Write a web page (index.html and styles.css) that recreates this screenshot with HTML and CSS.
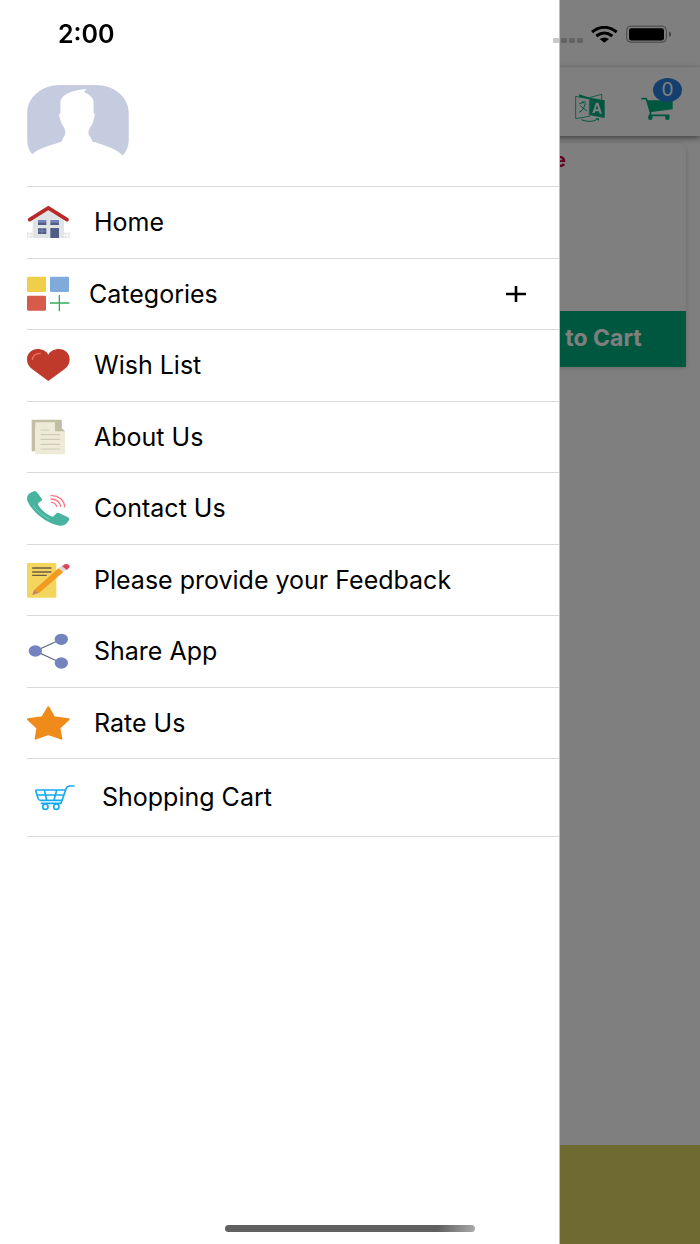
FILE: index.html
```html
<!DOCTYPE html>
<html lang="en">
<head>
<meta charset="utf-8">
<meta name="viewport" content="width=device-width, initial-scale=1">
<title>Shop menu</title>
<link rel="stylesheet" href="styles.css">
</head>
<body>
<div class="app">
  <header class="app-bar">
    <button class="icon-button" type="button" aria-label="Language">
      <svg class="translate-icon" viewBox="105 280 90 90" aria-hidden="true">
        <g fill="none" stroke="#00ae80" stroke-width="2.5">
          <path d="M107 290 148 298V350L107 357Z"/>
          <path d="M143 295 185 284V300"/>
          <path d="M118 312 137 306M128 304 129 311M136 310Q132 332 117 338M121 318Q130 328 141 333" stroke-width="3"/>
          <path d="M124 360Q150 371 172 359" stroke-width="3"/>
        </g>
        <path fill="#00ae80" d="M117 284 150 294 194 302V355L150 347V298L117 291ZM167 356H177V364Z"/>
        <path fill="#fff" fill-rule="evenodd" d="M168 309H175L186 342H179L177 335H166L164 340H157ZM171 316 167 329H175Z"/>
      </svg>
    </button>
    <button class="icon-button cart-button" type="button" aria-label="Cart">
      <svg class="cart-icon" viewBox="302 292 96 72" aria-hidden="true">
        <path fill="none" stroke="#00ae80" stroke-width="5" stroke-linecap="round" stroke-linejoin="round" d="M305 297H318L331 340 328 347H386"/>
        <path fill="#00ae80" d="M320 302H397V329L329 338Z"/>
        <circle cx="330" cy="354" r="7" fill="#00ae80"/><circle cx="381" cy="354" r="7" fill="#00ae80"/>
      </svg>
      <span class="badge">0</span>
    </button>
  </header>
  <main class="products">
    <article class="card">
      <h2 class="card-title">Apple</h2>
      <button class="add-button" type="button">Add to Cart</button>
    </article>
  </main>
  <footer class="app-footer"></footer>
</div>
<div class="scrim"></div>

<aside class="drawer">
  <div class="profile">
    <svg class="avatar" viewBox="81 254 306 214" role="img" aria-label="Profile picture">
      <path fill="#c6cce0" d="M96 463Q81 446 81 420V338C81 290 126 254 180 254H288C342 254 387 290 387 338V422Q386 447 369 467C354 449 328 439 277 424C274 416 273 412 268 407Q262 396 270 383C276 374 280 368 281 359Q286 346 284 340L281 339V304C280 290 266 282 252 275L260 267C222 267 184 282 181 304V340Q175 340 178 350L182 363Q186 373 191 381 199 394 193 407 188 414 185 424C138 440 109 448 96 463Z"/>
    </svg>
  </div>
  <nav class="menu" aria-label="Main">
    <a class="item" href="#home">
      <svg class="item-icon" viewBox="81 42 129 108" aria-hidden="true">
        <path fill="none" stroke="#dfe2e3" stroke-width="3" d="M81 131H209M81 141H209M83 127V145M93 127V145M197 127V145M207 127V145"/>
        <path fill="#e1e4e5" d="M98 84 145 54 192 84V144H98Z"/>
        <path fill="none" stroke="#b82a27" stroke-width="11" stroke-linecap="round" stroke-linejoin="miter" d="M89 89 145 54 201 89"/>
        <path fill="#7182c0" d="M114 90H139V97H114ZM151 90H177V97H151Z"/>
        <path fill="#525d83" d="M114 97H139V105H114ZM151 97H177V105H151ZM114 115H139V132H114ZM151 114H177V144H151Z"/>
        <path stroke="#8c9bd0" stroke-width="2" d="M126 115V132M114 123H139"/>
      </svg>
      <span>Home</span>
    </a>
    <button class="item item-expand" type="button" aria-expanded="false">
      <svg class="item-icon" viewBox="81 257 129 108" aria-hidden="true">
        <rect x="81" y="259" width="57" height="46" rx="4" fill="#efce4a"/>
        <rect x="150" y="259" width="57" height="46" rx="4" fill="#7fabda"/>
        <rect x="81" y="316" width="57" height="45" rx="4" fill="#d75a4a"/>
        <path fill="none" stroke="#35ad5b" stroke-width="4" d="M150 338H208M178 314V363"/>
      </svg>
      <span>Categories</span>
      <svg class="plus" viewBox="0 0 22 18" aria-hidden="true"><path fill="none" stroke="#000" stroke-width="2.6" d="M1 9H21M11 1V17"/></svg>
    </button>
    <a class="item" href="#wishlist">
      <svg class="item-icon" viewBox="81 471 129 108" aria-hidden="true">
        <path fill="#c03a2b" d="M145 573 97 538C85 529 81 519 81 508 81 490 95 477 113 477 128 477 140 484 145 494 150 484 162 477 177 477 195 477 209 490 209 508 209 519 205 529 193 538Z"/>
        <path fill="none" stroke="#ed7161" stroke-width="4" stroke-linecap="round" d="M97 508Q100 491 121 490"/>
      </svg>
      <span>Wish List</span>
    </a>
    <a class="item" href="#about">
      <svg class="item-icon" viewBox="81 56 129 108" aria-hidden="true">
        <path fill="#c3bea3" d="M95 58H185V80H106V153H95Z"/>
        <path fill="#edead8" d="M106 66H166L195 93V162H106Z"/>
        <path fill="#c3bea3" d="M165 66H185V83L195 93H165Z"/>
        <path stroke="#d0ccb3" stroke-width="3.5" stroke-linecap="round" d="M123 89H146M123 103H179M123 117H179M123 132H179M123 146H179"/>
      </svg>
      <span>About Us</span>
    </a>
    <a class="item" href="#contact">
      <svg class="item-icon" viewBox="81 270 129 108" aria-hidden="true">
        <path fill="#48b4a0" d="M102 274Q106 271 110 276L126 297Q128 301 122 304 113 309 114 313C120 327 137 343 157 350Q162 350 167 342 172 337 177 339L204 352Q210 356 207 361L198 372Q192 378 180 377C145 374 96 337 82 302Q79 289 87 281 94 277 102 274Z"/>
        <path fill="none" stroke="#7dd9c6" stroke-width="2" stroke-linecap="round" d="M101 319Q121 344 148 357"/>
        <path fill="none" stroke="#ff7483" stroke-width="4" stroke-linecap="round" d="M153 287C174 285 193 301 194 320M153 297Q176 297 182 319M154 307Q166 308 170 319"/>
      </svg>
      <span>Contact Us</span>
    </a>
    <a class="item" href="#feedback">
      <svg class="item-icon" viewBox="81 484 129 108" aria-hidden="true">
        <rect x="81" y="487" width="88" height="104" rx="4" fill="#f4d55d"/>
        <path stroke="#6d5a48" stroke-width="4" stroke-linecap="round" d="M98 502H153M98 514H153M98 524H139"/>
        <path fill="#f39b21" d="M103 567 176 502 190 514 117 577Z"/>
        <path fill="#c1876b" d="M103 567 96 583 117 577Z"/>
        <path fill="#d3dbe0" d="M176 502 184 495 198 507 190 514Z"/>
        <path fill="#dc4659" d="M186 497 194 491Q201 488 207 493 211 498 206 503L200 508Z"/>
      </svg>
      <span>Please provide your Feedback</span>
    </a>
    <a class="item" href="#share">
      <svg class="item-icon" viewBox="81 69 129 108" aria-hidden="true">
        <path fill="none" stroke="#5b6480" stroke-width="3.5" d="M184 88 106 123 184 159"/>
        <g fill="#7383bf"><ellipse cx="106" cy="123" rx="20" ry="17"/><ellipse cx="184" cy="88" rx="20" ry="17"/><ellipse cx="184" cy="159" rx="20" ry="17"/></g>
      </svg>
      <span>Share App</span>
    </a>
    <a class="item" href="#rate">
      <svg class="item-icon" viewBox="81 284 129 108" aria-hidden="true">
        <path fill="#ef8b1b" stroke="#ef8b1b" stroke-width="6" stroke-linejoin="round" d="M145 291 162 321 206 327 178 353 184 385 145 371 107 385 112 353 84 327 127 321Z"/>
      </svg>
      <span>Rate Us</span>
    </a>
    <a class="item item-cart" href="#cart">
      <svg class="item-icon" viewBox="105 509 129 108" aria-hidden="true">
        <g fill="none" stroke="#14aaf0" stroke-width="5" stroke-linecap="round" stroke-linejoin="round">
          <path d="M222 530H209Q201 530 198 539L183 582H124"/>
          <path d="M196 542H111Q106 542 108 547L115 569Q117 573 122 573H184M112 557H190M133 543 140 572M170 543 162 572"/>
          <circle cx="136" cy="592" r="8"/><circle cx="169" cy="592" r="8"/>
        </g>
      </svg>
      <span>Shopping Cart</span>
    </a>
  </nav>
</aside>

<div class="status-bar">
  <span class="clock">2:00</span>
  <div class="status-icons">
    <span class="signal"><i></i><i></i><i></i><i></i></span>
    <svg class="wifi" viewBox="154 77 81 51" aria-hidden="true">
      <path fill="none" stroke="#000" stroke-width="9" d="M157 95Q194 67 231 95M170 107Q194 89 218 107"/>
      <path d="M180 116Q194 107 208 116L194 127Z"/>
    </svg>
    <svg class="battery" viewBox="258 77 135 53" aria-hidden="true">
      <rect x="260" y="80" width="119" height="48" rx="12" fill="none" stroke="#444" stroke-width="3"/>
      <rect x="267" y="86" width="105" height="37" rx="7"/>
      <path fill="#444" d="M387 95Q393 98 393 104 393 110 387 112Z"/>
    </svg>
  </div>
</div>
<div class="home-indicator"></div>
</body>
</html>
```
FILE: styles.css
```css
* {
  box-sizing: border-box;
}

body {
  margin: 0;
  font-family: Inter, "Liberation Sans", sans-serif;
  color: #000;
  background: #fff;
}

button {
  font: inherit;
  color: inherit;
  background: none;
  border: 0;
  padding: 0;
  cursor: pointer;
}

svg {
  display: block;
  flex: none;
}

/* Shop page behind the drawer */
.app {
  display: flex;
  flex-direction: column;
  min-height: 100vh;
  padding-top: 67px;
}

.app-bar {
  display: flex;
  justify-content: flex-end;
  align-items: flex-end;
  gap: 36px;
  height: 69px;
  padding: 0 27px 13px 0;
  box-shadow: 0 2px 6px rgba(0, 0, 0, 0.5);
}

.translate-icon {
  width: 30px;
  height: 30px;
}

.cart-button {
  position: relative;
  padding-bottom: 2px;
}

.cart-icon {
  width: 32px;
  height: 24px;
}

.badge {
  position: absolute;
  top: -19px;
  right: -9px;
  width: 29px;
  height: 24px;
  border-radius: 50%;
  background: #2680dc;
  color: #fff;
  font-size: 19px;
  line-height: 24px;
  text-align: center;
}

.products {
  flex: 1;
  display: flex;
  justify-content: flex-end;
  align-items: flex-start;
  padding: 7px 14px;
}

.card {
  display: flex;
  flex-direction: column;
  justify-content: space-between;
  width: 208px;
  height: 224px;
  border-radius: 8px 8px 0 0;
  box-shadow: 0 1px 4px rgba(0, 0, 0, 0.2);
}

.card-title {
  width: 88px;
  margin: 5px 0 0;
  color: #c8003c;
  font-size: 20px;
  line-height: 24px;
  font-weight: 700;
  text-align: right;
}

.add-button {
  height: 56px;
  padding: 0 8px 2px 0;
  background: #00ae80;
  color: #fff;
  font-size: 23px;
  font-weight: 700;
}

.app-footer {
  height: 99px;
  background: #dcd464;
}

.scrim {
  position: fixed;
  inset: 0;
  background: rgba(0, 0, 0, 0.5);
}

/* Drawer */
.drawer {
  position: fixed;
  inset: 0 auto 0 0;
  width: 80%;
  padding-left: 27px;
  background: #fff;
  border-right: 1px solid #bbb;
}

.profile {
  padding: 85px 0 30px;
  border-bottom: 1px solid #d9d9d9;
}

.avatar {
  width: 102px;
  height: 71px;
}

.menu {
  display: flex;
  flex-direction: column;
}

.item {
  display: flex;
  align-items: center;
  gap: 24px;
  height: 71px;
  padding-bottom: 1px;
  border-bottom: 1px solid #d9d9d9;
  color: #000;
  font-size: 25px;
  line-height: 32px;
  text-align: left;
  text-decoration: none;
}

.item:nth-child(odd) {
  height: 72px;
}

.item-icon {
  width: 43px;
  height: 36px;
}

.item-expand {
  gap: 19px;
  padding-right: 32px;
}

.plus {
  width: 22px;
  height: 18px;
  margin-left: auto;
}

.menu .item-cart {
  height: 78px;
  padding-left: 8px;
}

/* System bars */
.status-bar {
  position: fixed;
  inset: 0 0 auto 0;
  display: flex;
  justify-content: space-between;
  align-items: center;
  height: 68px;
  padding: 0 29px 0 58px;
}

.clock {
  font-size: 25px;
  line-height: 32px;
  font-weight: 600;
}

.status-icons {
  display: flex;
  align-items: center;
  gap: 8px;
}

.signal {
  display: flex;
  gap: 2px;
  padding-top: 12px;
}

.signal i {
  width: 6px;
  height: 5px;
  border-radius: 1px;
  background: rgba(0, 0, 0, 0.22);
}

.wifi {
  width: 27px;
  height: 17px;
}

.battery {
  width: 45px;
  height: 18px;
}

.home-indicator {
  position: fixed;
  bottom: 12px;
  left: 50%;
  width: 250px;
  height: 7px;
  margin-left: -125px;
  border-radius: 4px;
  background: linear-gradient(100deg, #606060 85%, #aaa);
}
```
